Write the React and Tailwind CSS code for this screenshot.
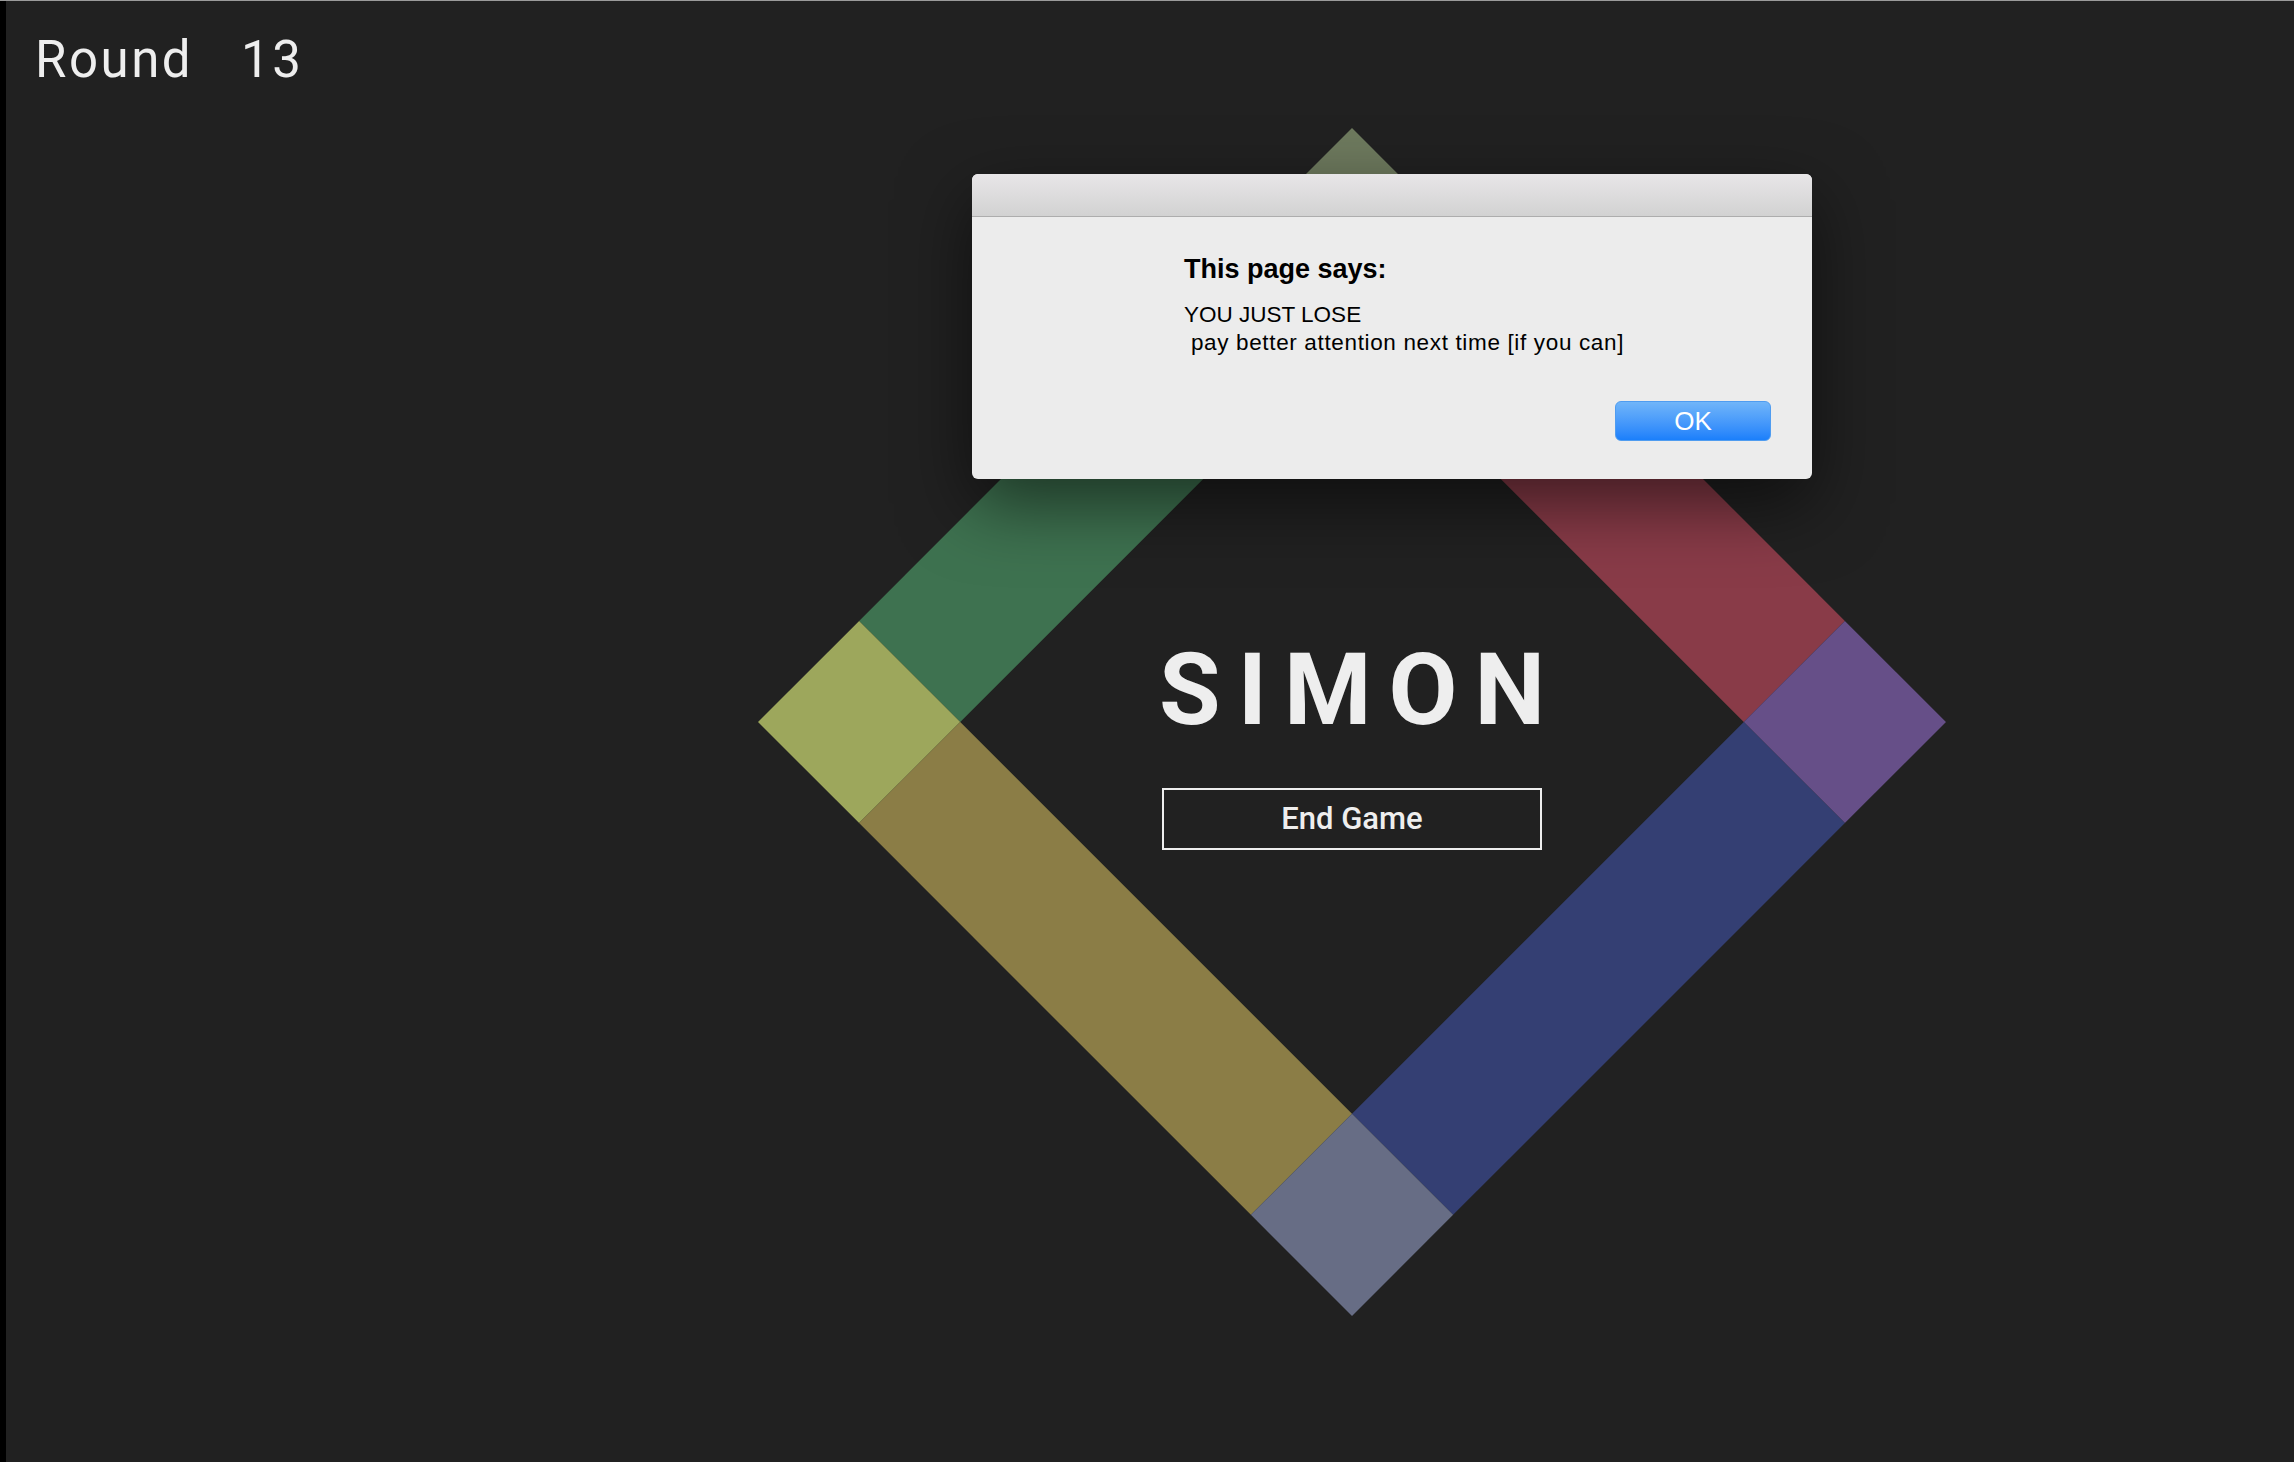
import React from "react";

const roboto = { fontFamily: "Roboto, 'Noto Sans', sans-serif" };

function Board() {
  return (
    <div className="grid h-[1188px] w-[1188px] place-items-center">
      <div className="grid h-[840px] w-[840px] rotate-45 grid-cols-[143px_1fr_143px] grid-rows-[143px_1fr_143px] [grid-area:1/1]">
        <div className="bg-[#6e7a5e]" />
        <div className="bg-[#893b48]" />
        <div className="bg-[#664f88]" />
        <div className="bg-[#3e7250]" />
        <div />
        <div className="bg-[#343f73]" />
        <div className="bg-[#9da75c]" />
        <div className="bg-[#8b7d46]" />
        <div className="bg-[#676d85]" />
      </div>
      <div className="flex flex-col items-center pt-[46px] [grid-area:1/1]" style={roboto}>
        <h1 className="mr-[-17px] text-[100px] font-bold leading-none tracking-[17px] text-[#eeeeee]">
          SIMON
        </h1>
        <button className="mt-[48px] flex h-[62px] w-[380px] items-center justify-center border-2 border-[#eeeeee] text-[31px] font-medium text-[#eeeeee]">
          End Game
        </button>
      </div>
    </div>
  );
}

function Alert() {
  return (
    <div
      className="absolute left-[972px] top-[173px] flex h-[305px] w-[840px] flex-col overflow-hidden rounded-[6px] bg-[#ececec] shadow-[0_25px_70px_rgba(0,0,0,0.55)]"
      style={{ fontFamily: "'Liberation Sans', Arial, sans-serif" }}
    >
      <div className="h-[43px] shrink-0 border-b border-[#adadad] bg-linear-to-b from-[#e8e6e8] to-[#d2d2d2]" />
      <div className="flex flex-1 flex-col pl-[212px] pt-[37px]">
        <div className="text-[27px] font-bold leading-[31px] text-black">This page says:</div>
        <div className="mt-[16px] text-[22.5px] leading-[28px] text-black">
          <div className="whitespace-pre">YOU JUST LOSE</div>
          <div className="whitespace-pre tracking-[0.65px]"> pay better attention next time [if you can]</div>
        </div>
        <button className="mb-[38px] mr-[41px] mt-auto flex h-[40px] w-[156px] items-center justify-center self-end rounded-[6px] border border-[#4f9cf0] bg-linear-to-b from-[#70b5f9] to-[#1a7ffb] text-[26px] leading-none text-white">
          OK
        </button>
      </div>
    </div>
  );
}

export default function App() {
  return (
    <div className="relative flex h-[1462px] w-full overflow-hidden border-t border-[#9b9b9b] bg-[#212121]">
      <div className="w-[6px] shrink-0 bg-black" />
      <main className="flex flex-1 flex-col">
        <header className="pl-[29px] pt-[33px]" style={roboto}>
          <div className="text-[51px] leading-none tracking-[2.5px] text-[#eeeeee]">
            <span>Round</span>
            <span className="ml-[48px]">13</span>
          </div>
        </header>
        <div className="ml-[752px] mt-[43px]">
          <Board />
        </div>
      </main>
      <Alert />
    </div>
  );
}
